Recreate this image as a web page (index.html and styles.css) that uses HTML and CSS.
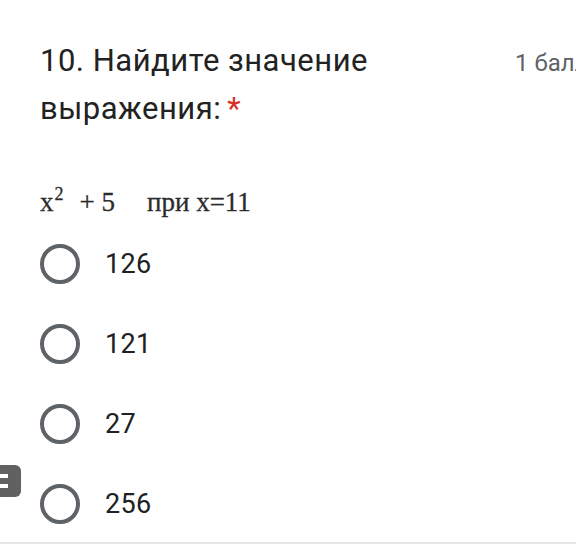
FILE: index.html
```html
<!DOCTYPE html>
<html lang="ru">
<head>
  <meta charset="UTF-8">
  <meta name="viewport" content="width=device-width, initial-scale=1.0">
  <title>Вопрос 10</title>

  <link rel="stylesheet" href="styles.css">

</head>
<body>

  <div id="question">
    <div class="header">
      <div class="title">10. Найдите значение выражения:<span class="required">*</span></div>
      <div class="points">1 балл</div>
    </div>

    <div class="formula">x<sup>2</sup>+ 5<span class="gap"></span>при x=11</div>

    <ul class="options">
      <li><span class="radio"></span><span class="label">126</span></li>
      <li><span class="radio"></span><span class="label">121</span></li>
      <li><span class="radio"></span><span class="label">27</span></li>
      <li><span class="radio"></span><span class="label">256</span></li>
    </ul>

    <div class="footer"></div>
  </div>

  <div class="side-tab">
    <span></span>
    <span></span>
  </div>

</body>
</html>
```

FILE: styles.css
```css
* {
  margin: 0;
  padding: 0;
  box-sizing: border-box;
}

html, body {
  width: 576px;
  height: 560px;
  overflow: hidden;
  background: #fff;
}

body {
  font-family: Roboto, "Noto Sans", sans-serif;
  color: #202124;
}

#question {
  padding-top: 37px;
}

#question .header {
  display: flex;
  align-items: baseline;
  padding-left: 40px;
  width: 700px;
}

#question .title {
  flex: 0 0 475px;
  font-size: 31px;
  line-height: 48px;
  letter-spacing: 0.5px;
  color: #222;
}

#question .title .required {
  margin-left: 6px;
  color: #d93025;
}

#question .points {
  font-size: 24px;
  color: #5f6368;
  white-space: nowrap;
}

#question .formula {
  margin-top: 54px;
  padding-left: 40px;
  font-family: "Liberation Serif", serif;
  font-size: 27px;
  line-height: 30px;
  color: #2b2b2b;
  -webkit-text-stroke: 0.3px #2b2b2b;
}

#question .formula sup {
  font-size: 18px;
  vertical-align: 11px;
  line-height: 0;
  margin: 0 16px 0 1px;
}

#question .formula .gap {
  display: inline-block;
  width: 32px;
}

#question .options {
  list-style: none;
  margin-top: 7px;
  padding-left: 40px;
}

#question .options li {
  display: flex;
  align-items: center;
  height: 80px;
}

#question .options .radio {
  width: 40px;
  height: 40px;
  border: 4px solid #5f6368;
  border-radius: 50%;
  flex-shrink: 0;
}

#question .options .label {
  margin-left: 25px;
  font-size: 27px;
  letter-spacing: 0.3px;
  color: #202124;
}

#question .footer {
  border-top: 2px solid #e6e6e6;
  margin-top: -2px;
}

.side-tab {
  position: absolute;
  left: 0;
  top: 465px;
  width: 21px;
  height: 32px;
  background: #616161;
  border-radius: 0 6px 6px 0;
  display: flex;
  flex-direction: column;
  justify-content: center;
  gap: 6px;
}

.side-tab span {
  display: block;
  width: 8px;
  height: 4px;
  background: #fff;
}
```
